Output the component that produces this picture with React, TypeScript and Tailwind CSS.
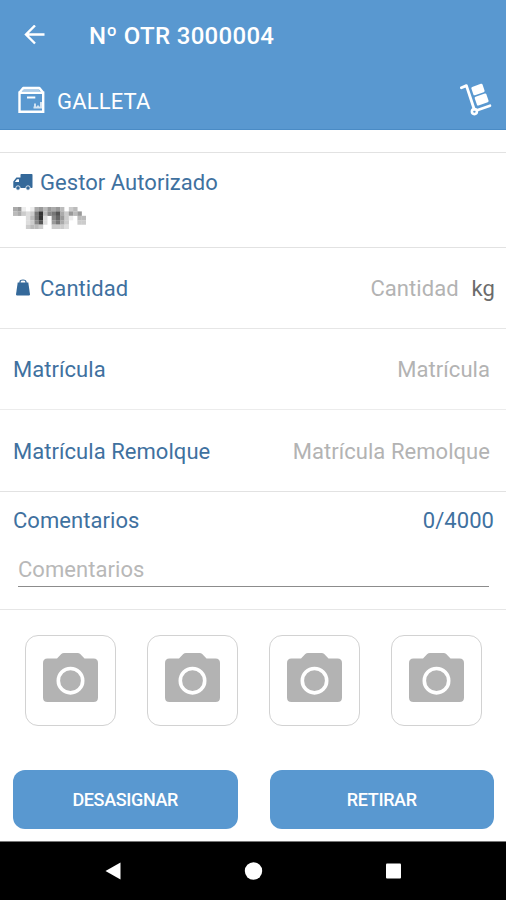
const photoSlots = [1, 2, 3, 4];

// Grey levels of the hidden manager name, one row per line of blocks.
const maskedName = [
  "a9e.ea9b9a9bfcb..",
  "bacdc73b875ac9b9.",
  "...db73d.869ce.bb",
  "...dc85d.97ac..cc",
  "...cbbc..cccd....",
];

function BoxIcon() {
  return (
    <svg width="28" height="28" viewBox="0 0 28 28" fill="none" stroke="white" strokeWidth="2.4">
      <path d="M1.6 6.600 5.2 2H21.4L25 6.600" strokeLinejoin="round" />
      <path d="M5 4.200H21.500" strokeWidth="2" opacity=".5" />
      <path d="M1.500 6.700H25.200V25.700H1.500Z" />
      <path d="M9 11.5H17.3" strokeWidth="2" />
      <path d="M17 17.500V21M23 16V21M15.5 21.500H24M20 19.500V22M22 18.500H24" strokeWidth="1.9" opacity=".75" />
    </svg>
  );
}

function HandTruckIcon() {
  return (
    <svg width="32" height="34" viewBox="0 0 32 34" fill="none" stroke="white">
      <path d="M1.4 4.700 6.4 2.6 14.2 26.2" strokeWidth="2.800" strokeLinecap="round" strokeLinejoin="round" />
      <path d="M17 27.3 30 22.7" strokeWidth="2.600" strokeLinecap="round" />
      <circle cx="14.400" cy="28.6" r="2.500" strokeWidth="2.600" />
      <path d="M12.600 5.1 21.3 2 23.3 8 14.600 11Z" fill="white" strokeWidth="2.600" strokeLinejoin="round" />
      <path d="M16 15 25.200 11.8 27.300 18 18.100 21.2Z" fill="white" strokeWidth="2.600" strokeLinejoin="round" />
    </svg>
  );
}

function TruckIcon() {
  return (
    <svg width="20" height="17" viewBox="0 0 20 17" fill="#34699a">
      <path
        fillRule="evenodd"
        d="M7.500 .8Q7.500 0 8.300 0H18.7Q19.500 0 19.500 .8V13.2Q19.500 14 18.700 14H1Q.3 14 .3 13.300V7.500L3.400 3.600H7.500ZM1.900 8H6V5.200H4Z"
      />
      <circle cx="5" cy="14" r="2.200" stroke="white" strokeWidth=".8" />
      <circle cx="15" cy="14" r="2.200" stroke="white" strokeWidth=".8" />
    </svg>
  );
}

function WeightIcon() {
  return (
    <svg width="16" height="18" viewBox="0 0 16 18">
      <path d="M5 4.500V3Q5 1 8 1T11 3V4.500" fill="none" stroke="#34699a" strokeWidth="1.2" />
      <path d="M2.700 3.600H13.300L15 15.600Q15 16.400 14.200 16.400H1.800Q1 16.400 1 15.600Z" fill="#34699a" />
    </svg>
  );
}

function CameraIcon() {
  return (
    <svg width="56" height="51" viewBox="0 0 56 51">
      <path
        d="M4.500 5.500H14L18.3 1Q19.3 0 21 0H34.500Q36.200 0 37.200 1L41.500 5.500H50.500Q55 5.500 55 10V44.500Q55 49 50.500 49H4.500Q0 49 0 44.500V10Q0 5.500 4.500 5.500Z"
        fill="#b3b3b3"
      />
      <circle cx="27.500" cy="27.700" r="12.200" fill="none" stroke="white" strokeWidth="3.600" />
    </svg>
  );
}

export default function App() {
  return (
    <div className="flex h-[900px] w-[506px] flex-col overflow-hidden bg-white font-['Roboto',sans-serif] text-[22px] tracking-[0.05px] text-[#3f719f]">
      <header className="h-[130px] shrink-0 border-b border-[#4a8bc5] bg-[#5998d0] text-white">
        <div className="flex h-[70px] items-center pl-6">
          <svg width="21" height="20" viewBox="0 0 21 20" fill="none" stroke="white" strokeWidth="2.4">
            <path d="M20.500 9.500H2M11 .5 2 9.500l9 9" />
          </svg>
          <h1 className="mt-[2px] ml-[44px] text-[24px] font-medium tracking-[0.3px]">Nº OTR 3000004</h1>
        </div>
        <div className="flex h-[60px] items-center pr-[14px] pl-[18px]">
          <BoxIcon />
          <span className="mt-[2px] ml-[11px] flex-1 tracking-[0.15px]">GALLETA</span>
          <HandTruckIcon />
        </div>
      </header>

      <main className="flex flex-1 flex-col">
        <section className="mt-[22px] h-[95px] border-t border-[#e2e2e2] px-[13px] pt-[14px]">
          <div className="flex h-[30px] items-center">
            <TruckIcon />
            <h2 className="ml-[7px]">Gestor Autorizado</h2>
          </div>
          <svg className="mt-[10px] blur-[0.6px]" width="73" height="22" viewBox="0 0 17 5" preserveAspectRatio="none">
            {maskedName.map((row, y) =>
              row.split("").map((level, x) =>
                level === "." ? null : (
                  <rect key={`${x}-${y}`} x={x} y={y} width="1.03" height="1.03" fill={`#${level.repeat(3)}`} />
                )
              )
            )}
          </svg>
        </section>

        <label className="flex h-[81px] items-center border-t border-[#e2e2e2] pr-[11px] pl-[15px]">
          <WeightIcon />
          <span className="ml-[9px] flex-1">Cantidad</span>
          <span className="text-[#b3b3b3]">Cantidad</span>
          <span className="ml-[13px] text-[#6b6b6b]">kg</span>
        </label>
        <label className="flex h-[81px] items-center justify-between border-t border-[#e6e6e6] pr-4 pl-[13px]">
          <span>Matrícula</span>
          <span className="text-[#b3b3b3]">Matrícula</span>
        </label>
        <label className="flex h-[82px] items-center justify-between border-t border-[#ececec] pr-4 pl-[13px] pt-px">
          <span>Matrícula Remolque</span>
          <span className="text-[#b3b3b3]">Matrícula Remolque</span>
        </label>

        <section className="h-[118px] border-t border-[#e2e2e2] px-[13px] pt-[12px]">
          <div className="-mr-px flex h-[32px] items-center justify-between">
            <h2>Comentarios</h2>
            <span>0/4000</span>
          </div>
          <div className="mr-[4px] ml-[5px] mt-[11px] flex h-[40px] items-end border-b border-[#8c8c8c] pb-px leading-[30px] text-[#b8b8b8]">
            Comentarios
          </div>
        </section>

        <section className="flex h-[161px] justify-between border-t border-[#e6e6e6] pr-[24px] pl-[25px] pt-[25px]">
          {photoSlots.map((slot) => (
            <button
              key={slot}
              className="flex h-[91px] w-[91px] items-start justify-center rounded-[13px] border border-[#d2d2d2] pt-[17px]"
            >
              <CameraIcon />
            </button>
          ))}
        </section>

        <div className="flex gap-8 pr-[12px] pl-[13px] text-[18px] font-medium tracking-[-0.35px] text-white">
          <button className="h-[59px] flex-1 rounded-[12px] bg-[#5998d0]">DESASIGNAR</button>
          <button className="h-[59px] flex-1 rounded-[12px] bg-[#5998d0]">RETIRAR</button>
        </div>
      </main>

      <nav className="flex h-[59px] shrink-0 items-center justify-center border-t border-[#777] bg-black">
        <svg width="296" height="18" viewBox="0 0 296 18" fill="white">
          <path d="M.5 9 15.500 .5V17.500Z" />
          <circle cx="148.500" cy="9" r="8.700" />
          <rect x="281" y="1.500" width="15" height="15" rx="1" />
        </svg>
      </nav>
    </div>
  );
}
